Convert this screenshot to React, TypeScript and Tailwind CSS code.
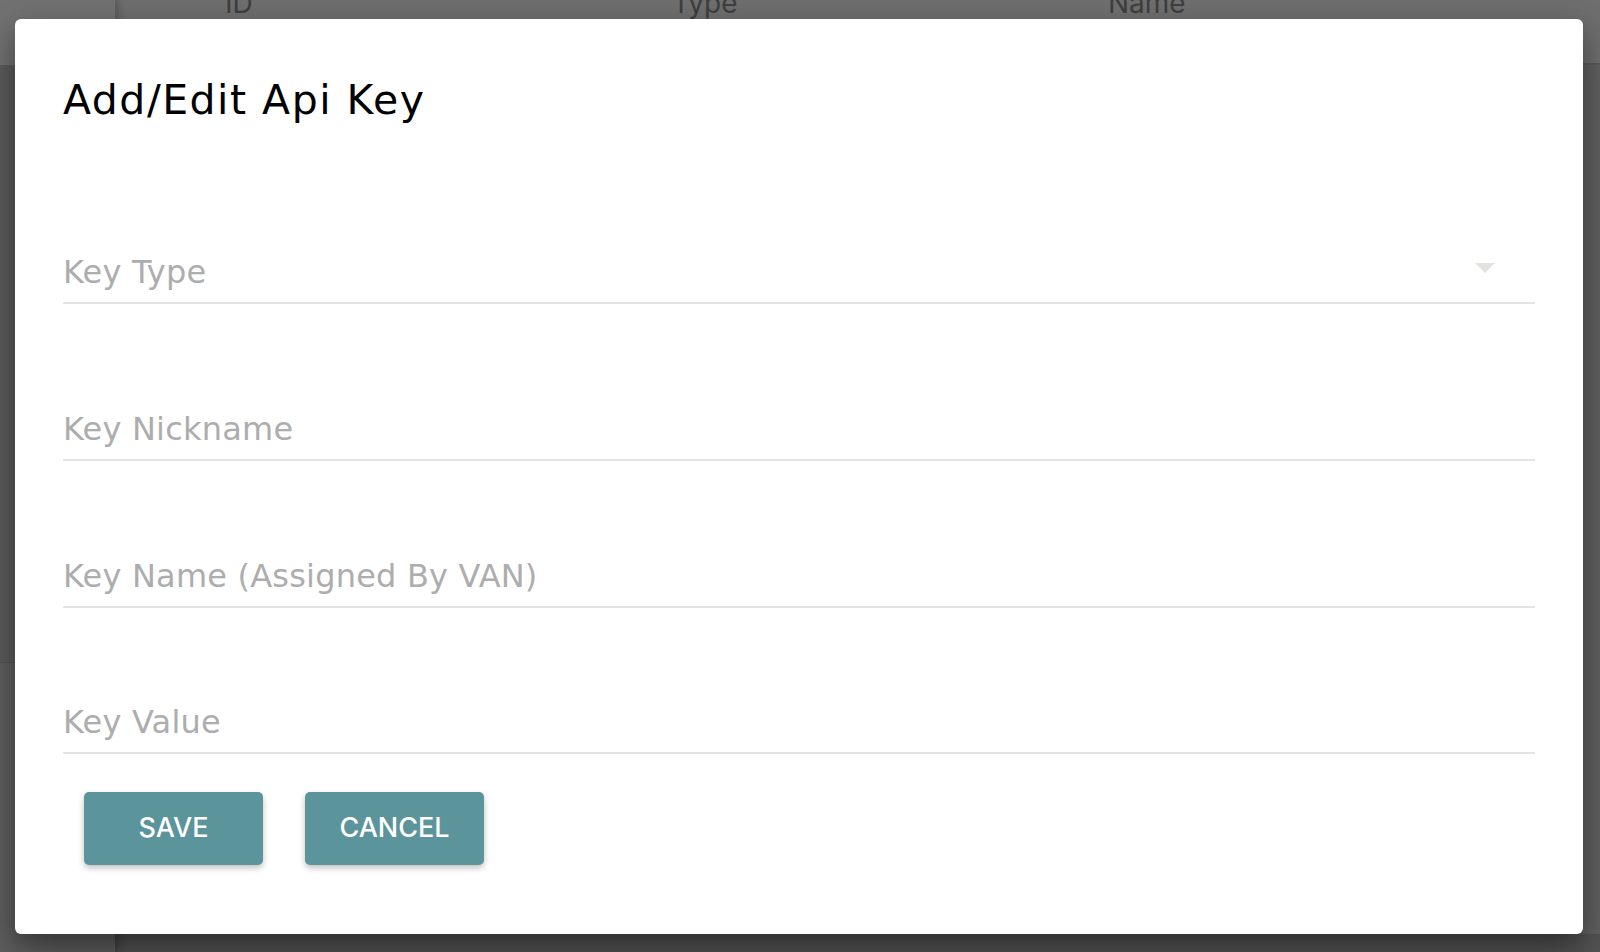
import React from "react";

const labelFont = { fontFamily: "'DejaVu Sans', Inter, sans-serif" };
const btnFont = { fontFamily: "Inter, 'Noto Sans', sans-serif" };

function Field({ label, select, mt }: { label: string; select?: boolean; mt: string }) {
  return (
    <div className={"flex items-start border-b-2 border-[#e4e4e4] " + mt}>
      <div className="flex-1 h-[49px] text-[32px] leading-[38px] tracking-[0.2px] text-[#adadad]" style={labelFont}>
        {label}
      </div>
      {select && (
        <svg width="20" height="10" viewBox="0 0 20 10" className="mt-[10px] mr-[40px]">
          <polygon points="0,0 20,0 10,10" fill="#e2e2de" />
        </svg>
      )}
    </div>
  );
}

export default function App() {
  return (
    <div className="relative w-[1600px] h-[952px] overflow-hidden flex bg-[#585858]" style={btnFont}>
      {/* page behind the dialog */}
      <div className="relative z-[1] w-[115px] shrink-0 flex flex-col shadow-[4px_0_8px_rgba(0,0,0,0.2)]">
        <div className="h-[65px] bg-[#717171]" />
        <div className="h-[598px] bg-[#5c5c5c] border-b border-[#525252]" />
        <div className="flex-1 bg-[#5f5f5f]" />
      </div>
      <div className="flex-1 flex flex-col">
        <div className="h-[65px] bg-[#6e6e6e] border-b-2 border-[#5a5a5a] grid grid-cols-[557px_436px_1fr] text-[28px] leading-[40px] text-[#3e3e3e]">
          <div className="pl-[110px] -mt-[17px]">ID</div>
          <div className="-mt-[17px]">Type</div>
          <div className="-mt-[17px]">Name</div>
        </div>
        <div className="flex-1 bg-[#616161]" />
        <div className="h-[18px] bg-[#545454]" />
      </div>

      {/* dialog */}
      <div className="absolute z-10 left-[15px] top-[19px] w-[1568px] h-[915px] bg-white rounded-[6px] shadow-[0_20px_40px_rgba(0,0,0,0.3),0_8px_20px_rgba(0,0,0,0.2)] flex flex-col">
        <div className="px-[48px] pt-[49px] text-[41px] leading-[64px] tracking-[1.5px] text-black" style={labelFont}>
          Add/Edit Api Key
        </div>
        <div className="px-[48px] flex flex-col">
          <Field label="Key Type" select mt="mt-[121px]" />
          <Field label="Key Nickname" mt="mt-[106px]" />
          <Field label="Key Name (Assigned By VAN)" mt="mt-[96px]" />
          <Field label="Key Value" mt="mt-[95px]" />
        </div>
        <div className="flex gap-[42px] pl-[69px] mt-[38px]">
          <button className="w-[179px] h-[73px] rounded-[5px] bg-[#5b949a] text-white text-[27px] font-medium uppercase shadow-[0_3px_6px_rgba(0,0,0,0.25)]">
            Save
          </button>
          <button className="w-[179px] h-[73px] rounded-[5px] bg-[#5b949a] text-white text-[27px] font-medium uppercase shadow-[0_3px_6px_rgba(0,0,0,0.25)]">
            Cancel
          </button>
        </div>
      </div>
    </div>
  );
}
